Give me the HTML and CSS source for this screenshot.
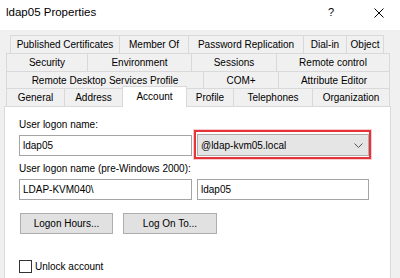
FILE: index.html
```html
<!DOCTYPE html>
<html lang="en">

<head>
  <meta charset="UTF-8">
  <title>ldap05 Properties</title>
  <link rel="stylesheet" href="styles.css">
</head>

<body>
  <div class="titlebar">
    <span class="title">ldap05 Properties</span>
    <span class="help">?</span>
    <svg class="close" width="10" height="10" viewBox="0 0 10 10">
      <path d="M0.5 0.5 L9.5 9.5 M9.5 0.5 L0.5 9.5" stroke="#000" stroke-width="1" fill="none" />
    </svg>
  </div>

  <!-- tab rows, back to front -->
  <div class="tabs">
    <div class="row row1">
      <div class="tab">Published Certificates</div>
      <div class="tab">Member Of</div>
      <div class="tab">Password Replication</div>
      <div class="tab">Dial-in</div>
      <div class="tab">Object</div>
    </div>
    <div class="row row2">
      <div class="tab">Security</div>
      <div class="tab">Environment</div>
      <div class="tab">Sessions</div>
      <div class="tab">Remote control</div>
    </div>
    <div class="row row3">
      <div class="tab">Remote Desktop Services Profile</div>
      <div class="tab">COM+</div>
      <div class="tab">Attribute Editor</div>
    </div>
    <div class="row row4">
      <div class="tab">General</div>
      <div class="tab">Address</div>
      <div class="tab active">Account</div>
      <div class="tab">Profile</div>
      <div class="tab">Telephones</div>
      <div class="tab">Organization</div>
    </div>
  </div>

  <div class="panel">
    <div class="field-label">User logon name:</div>
    <div class="field-row">
      <div class="input">ldap05</div>
      <div class="combo-wrap">
        <div class="combo">
          <span>@ldap-kvm05.local</span>
          <svg width="9" height="5" viewBox="0 0 9 5">
            <path d="M0.5 0.5 L4.5 4.5 L8.5 0.5" stroke="#555" stroke-width="1" fill="none" />
          </svg>
        </div>
      </div>
    </div>

    <div class="field-label label2">User logon name (pre-Windows 2000):</div>
    <div class="field-row">
      <div class="input">LDAP-KVM040\</div>
      <div class="input">ldap05</div>
    </div>

    <div class="buttons">
      <div class="btn btn-hours">Logon Hours...</div>
      <div class="btn btn-logon">Log On To...</div>
    </div>

    <div class="check">
      <span class="box"></span>
      <span>Unlock account</span>
    </div>
  </div>
</body>

</html>
```

FILE: styles.css
```css
* {
  margin: 0;
  padding: 0;
  box-sizing: border-box;
}

body {
  width: 400px;
  height: 278px;
  overflow: hidden;
  background: #f0f0f0;
  font-family: "Liberation Sans", Arial, sans-serif;
  font-size: 10px;
  color: #000;
}

/* title bar */
.titlebar {
  height: 30px;
  background: #fff;
  display: flex;
  align-items: center;
  padding-left: 6px;
}

.title {
  flex: 1;
  font-size: 11.5px;
  margin-top: -6px;
}

.help {
  font-size: 11px;
  margin-right: 40px;
  margin-top: -6px;
}

.close {
  margin-right: 16px;
  margin-top: -5px;
}

/* tabs */
.tabs {
  padding-top: 5px;
}

.row {
  display: grid;
  height: 18px;
  width: 384px;
  margin-left: 6px;
}

.row1 {
  width: 374px;
  margin-left: 10px;
  grid-template-columns: 109px 69px 115px 43px 38px;
}

.row2 {
  grid-template-columns: 81px 104px 85px 114px;
}

.row3 {
  height: 17px;
  grid-template-columns: 197px 75px 112px;
}

.row4 {
  grid-template-columns: 58px 58px 65px 46px 79px 78px;
}

.tab {
  display: flex;
  align-items: center;
  justify-content: center;
  white-space: nowrap;
  border-top: 1px solid #d9d9d9;
  border-left: 1px solid #d9d9d9;
  background: #f0f0f0;
}

.tab:last-child {
  border-right: 1px solid #d9d9d9;
}

.tab.active {
  position: relative;
  z-index: 1;
  margin-top: -2px;
  margin-bottom: -1px;
  background: #fff;
  border-right: 1px solid #d9d9d9;
  padding-bottom: 2px;
}

.tab.active + .tab {
  border-left: none;
}

/* page */
.panel {
  width: 387px;
  height: 180px;
  margin-left: 4px;
  background: #fff;
  border: 1px solid #d9d9d9;
  padding: 11px 0 0 14px;
}

.field-label {
  height: 14px;
  line-height: 14px;
}

.label2 {
  margin-top: 6px;
}

.field-row {
  display: grid;
  grid-template-columns: 173px 172px;
  column-gap: 5px;
  align-items: start;
  margin-top: 3px;
}

.input {
  height: 21px;
  line-height: 19px;
  padding-left: 3px;
  background: #fff;
  border: 1px solid #a5a5a5;
  white-space: nowrap;
}

.combo-wrap {
  position: relative;
  margin-top: -1px;
}

/* red highlight drawn over the combo box */
.combo-wrap::after {
  content: "";
  position: absolute;
  left: -3px;
  right: -2px;
  top: -4px;
  bottom: -3px;
  border: 2px solid #e4343a;
  box-shadow: 0 0 0 1px rgba(228, 52, 58, 0.25);
}

.combo {
  height: 22px;
  display: flex;
  align-items: center;
  justify-content: space-between;
  padding: 0 5px 0 3px;
  background: #e5e5e5;
  border: 1px solid #adadad;
}

.buttons {
  display: flex;
  gap: 10px;
  margin-top: 13px;
  padding-left: 1px;
}

.btn {
  height: 21px;
  line-height: 19px;
  text-align: center;
  background: #e1e1e1;
  border: 1px solid #adadad;
}

.btn-hours {
  width: 93px;
}

.btn-logon {
  width: 94px;
}

.check {
  display: flex;
  align-items: center;
  gap: 3px;
  margin-top: 26px;
}

.box {
  width: 13px;
  height: 13px;
  background: #fff;
  border: 1px solid #333;
}
```
